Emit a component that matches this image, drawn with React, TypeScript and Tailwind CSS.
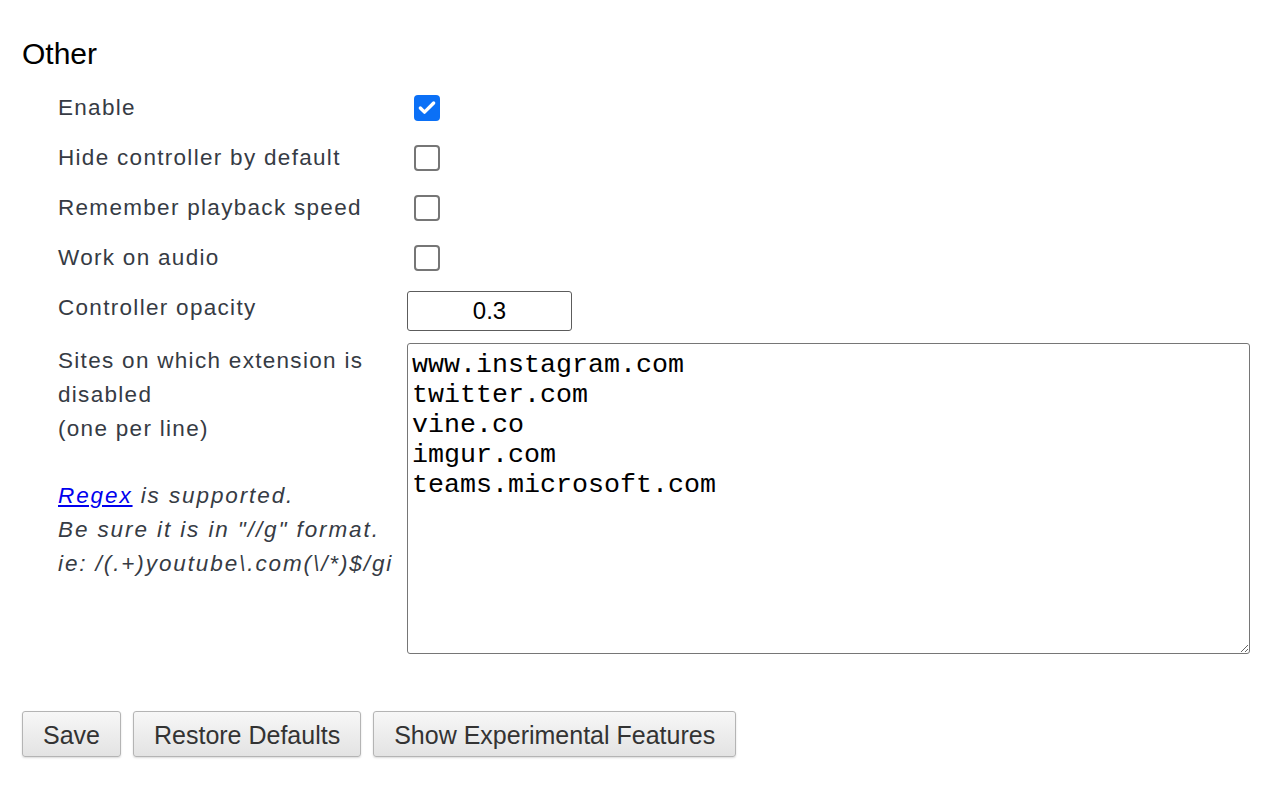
import { Check } from "lucide-react";

const SITES = ["www.instagram.com", "twitter.com", "vine.co", "imgur.com", "teams.microsoft.com"].join("\n");

function Box({ checked }: { checked?: boolean }) {
  if (checked) {
    return (
      <span className="ml-[7px] grid h-[26px] w-[26px] place-items-center rounded-[4px] bg-[#0b70f6]">
        <Check className="h-[20px] w-[20px] text-white" strokeWidth={4} />
      </span>
    );
  }
  return <span className="ml-[7px] block h-[26px] w-[26px] rounded-[4px] border-2 border-[#767676] bg-white" />;
}

function Row({ label, children }: { label: string; children: React.ReactNode }) {
  return (
    <div className="flex h-[50px] items-center">
      <div className="w-[349px] text-[22.5px] tracking-[1.3px] text-[#363b44]">{label}</div>
      {children}
    </div>
  );
}

const btn =
  "h-[46px] rounded-[3px] border border-[#b4b4b4] bg-gradient-to-b from-[#f7f7f7] to-[#e3e3e3] px-[20px] pt-[3px] text-[25px] text-[#333] shadow-[0_1px_2px_rgba(0,0,0,0.15)]";

export default function App() {
  return (
    <div className="min-h-screen bg-white px-[22px] pt-[34px] font-['Liberation_Sans',Arial,sans-serif]">
      <h2 className="text-[30px] leading-[40px] text-black">Other</h2>
      <div className="ml-[36px] mt-[9px]">
        <Row label="Enable">
          <Box checked />
        </Row>
        <Row label="Hide controller by default">
          <Box />
        </Row>
        <Row label="Remember playback speed">
          <Box />
        </Row>
        <Row label="Work on audio">
          <Box />
        </Row>
        <Row label="Controller opacity">
          <div className="mt-[6px] grid h-[40px] w-[165px] place-items-center rounded-[3px] border border-[#5c5c5c] text-[24px] text-black">
            0.3
          </div>
        </Row>
        <div className="mt-[10px] flex">
          <div className="w-[349px] pt-[1px] text-[22.5px] leading-[33.8px] tracking-[1.3px] text-[#363b44]">
            Sites on which extension is disabled
            <br />
            (one per line)
            <br />
            <br />
            <em className="whitespace-nowrap tracking-[1.9px]">
              <a href="#" className="text-[#0000ee] underline">
                Regex
              </a>{" "}
              is supported.
              <br />
              Be sure it is in "//g" format.
              <br />
              ie: /(.+)youtube\.com(\/*)$/gi
            </em>
          </div>
          <textarea
            readOnly
            defaultValue={SITES}
            className="h-[311px] w-[843px] resize rounded-[3px] border border-[#767676] px-[4px] pt-[6px] font-['Liberation_Mono','Courier_New',monospace] text-[26.67px] leading-[30px] text-black outline-none"
          />
        </div>
      </div>
      <div className="mt-[57px] flex gap-[12px]">
        <button className={btn}>Save</button>
        <button className={btn}>Restore Defaults</button>
        <button className={btn}>Show Experimental Features</button>
      </div>
    </div>
  );
}
